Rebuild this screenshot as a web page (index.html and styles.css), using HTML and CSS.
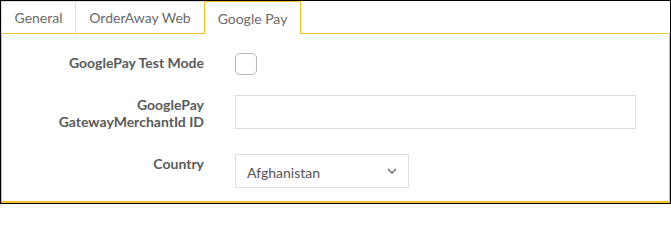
FILE: index.html
```html
<!DOCTYPE html>
<html>
<head>
<meta charset="utf-8">
<link rel="stylesheet" href="styles.css">
</head>
<body>
<div class="frame">
  <div class="tabs">
    <div class="tab tab-general">General</div>
    <div class="tab tab-web">OrderAway Web</div>
    <div class="tab tab-active">Google Pay</div>
    <div class="tab-rest"></div>
  </div>
  <div class="panel">
    <div class="row row-check">
      <label class="lbl">GooglePay Test Mode</label>
      <div class="ctl"><span class="checkbox"></span></div>
    </div>
    <div class="row row-input">
      <label class="lbl">GooglePay<br>GatewayMerchantId ID</label>
      <div class="ctl"><span class="input"></span></div>
    </div>
    <div class="row row-select">
      <label class="lbl">Country</label>
      <div class="ctl">
        <span class="select">
          <span class="select-text">Afghanistan</span>
          <svg class="chev" width="10" height="6" viewBox="0 0 10 6"><path d="M1 1 L5 5 L9 1" fill="none" stroke="#666" stroke-width="1.3"/></svg>
        </span>
      </div>
    </div>
  </div>
</div>
</body>
</html>
```

FILE: styles.css
```css
html, body {
  margin: 0;
  padding: 0;
  background: #fff;
}
body {
  font-family: "Lato", "Noto Sans", sans-serif;
  font-size: 14px;
  color: #555;
}
.frame {
  width: 669px;
  height: 202px;
  border: 1px solid #000;
  overflow: hidden;
  display: flex;
  flex-direction: column;
}
.tabs {
  display: flex;
  height: 33px;
  flex: none;
}
.tab {
  box-sizing: border-box;
  height: 33px;
  display: flex;
  align-items: center;
  justify-content: center;
  color: #6a6a6a;
  border-top: 1px solid #ddd;
  border-right: 1px solid #ddd;
  border-bottom: 1px solid #f0c030;
  background: #fff;
}
.tab-general {
  width: 75px;
  border-left: 1px solid #ddd;
}
.tab-web {
  width: 129px;
}
.tab-active {
  width: 97px;
  margin-left: -1px;
  border: 1px solid #f0c030;
  border-bottom: none;
}
.tab-rest {
  flex: 1;
  border-bottom: 1px solid #f0c030;
}
.panel {
  flex: 1;
  box-sizing: border-box;
  border: 1px solid #f0c030;
  border-top: none;
  border-bottom-width: 2px;
  padding-top: 19px;
}
.row {
  display: flex;
  align-items: flex-start;
}
.lbl {
  box-sizing: border-box;
  width: 202px;
  flex: none;
  text-align: right;
  font-weight: bold;
  color: #5a5a5a;
  line-height: 17px;
  padding-top: 1px;
}
.ctl {
  margin-left: 31px;
}
.row-check {
  height: 22px;
  margin-bottom: 20px;
}
.row-input {
  height: 34px;
  margin-bottom: 25px;
}
.checkbox {
  display: block;
  box-sizing: border-box;
  width: 22px;
  height: 22px;
  border: 1px solid #b8b8b8;
  border-radius: 5px;
}
.input {
  display: block;
  box-sizing: border-box;
  width: 401px;
  height: 34px;
  border: 1px solid #ddd;
}
.select {
  box-sizing: border-box;
  width: 174px;
  height: 34px;
  border: 1px solid #ddd;
  display: flex;
  align-items: center;
  justify-content: space-between;
  padding: 0 11px 0 11px;
  color: #555;
}
.select-text {
  padding-top: 2px;
}
.chev {
  display: block;
}
```
